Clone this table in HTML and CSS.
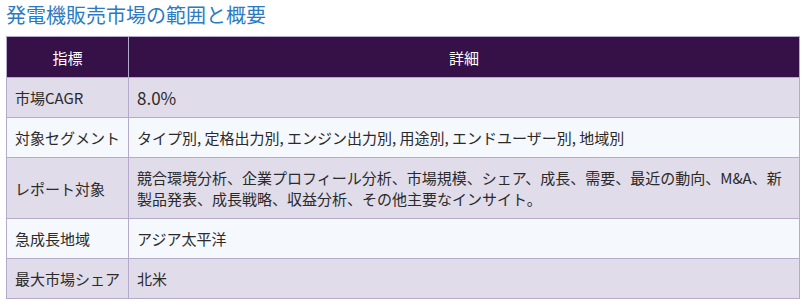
FILE: index.html
```html
<!DOCTYPE html>
<html lang="ja">
<head>
<meta charset="utf-8">
<link rel="stylesheet" href="styles.css">
</head>
<body>
<div class="wrap">
  <h2 class="title">発電機販売市場の範囲と概要</h2>
  <table class="summary">
    <thead>
      <tr><th class="col-key">指標</th><th>詳細</th></tr>
    </thead>
    <tbody>
      <tr><td>市場CAGR</td><td class="big">8.0%</td></tr>
      <tr><td>対象セグメント</td><td>タイプ別, 定格出力別, エンジン出力別, 用途別, エンドユーザー別, 地域別</td></tr>
      <tr><td>レポート対象</td><td>競合環境分析、企業プロフィール分析、市場規模、シェア、成長、需要、最近の動向、M&amp;A、新製品発表、成長戦略、収益分析、その他主要なインサイト。</td></tr>
      <tr><td>急成長地域</td><td>アジア太平洋</td></tr>
      <tr><td>最大市場シェア</td><td>北米</td></tr>
    </tbody>
  </table>
</div>
</body>
</html>
```

FILE: styles.css
```css
html, body {
  margin: 0;
  padding: 0;
  background: #ffffff;
}
body {
  font-family: "Noto Sans CJK JP", "Noto Sans", sans-serif;
  color: #2a2a2a;
}
.wrap {
  padding: 0 2px 0 6px;
}
.title {
  margin: 0;
  padding-top: 1px;
  font-size: 20px;
  line-height: 28px;
  font-weight: 400;
  color: #2c7bc2;
  height: 35px;
}
.summary {
  width: 794px;
  border-collapse: collapse;
  table-layout: fixed;
  border: 1px solid #b4aacb;
}
.summary th,
.summary td {
  border: 1px solid #b4aacb;
  font-size: 15px;
  line-height: 21px;
  padding: 9px 8px;
  text-align: left;
  vertical-align: middle;
}
.summary th {
  background: #361148;
  color: #ffffff;
  font-weight: 400;
  text-align: center;
  padding: 10px 8px 9px;
}
.summary .col-key {
  width: 105px;
}
.summary tbody tr:nth-child(odd) td {
  background: #e0dcea;
}
.summary tbody tr:nth-child(even) td {
  background: #f5f8fc;
}
.summary td.big {
  font-size: 17px;
}
```
